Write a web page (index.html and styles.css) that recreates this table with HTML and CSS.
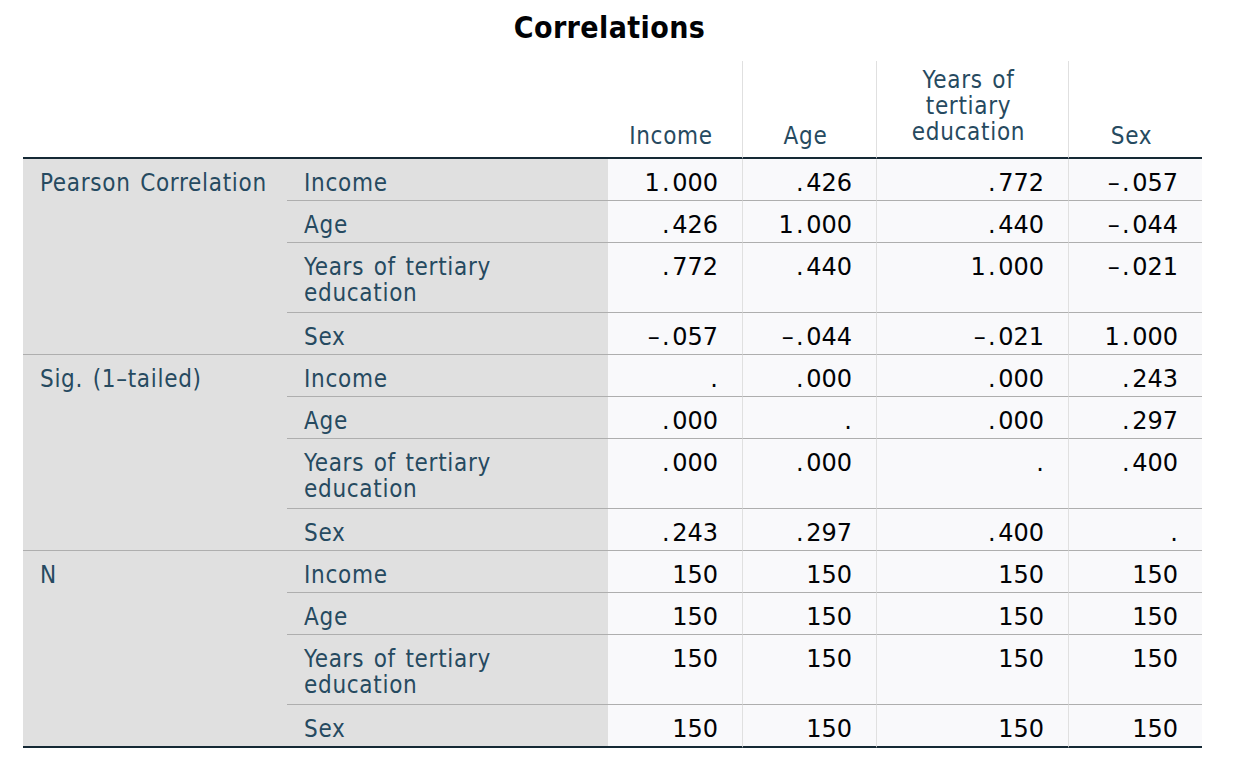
FILE: index.html
```html
<!DOCTYPE html>
<html>
<head>
<meta charset="utf-8">
<title>Correlations</title>
<link rel="stylesheet" href="styles.css">
</head>
<body>
<div class="wrap">
  <div class="title">Correlations</div>
  <table class="corr">
    <colgroup>
      <col class="c1"><col class="c2"><col class="c3"><col class="c4"><col class="c5"><col class="c6">
    </colgroup>
    <thead>
      <tr>
        <th class="blank" colspan="2"></th>
        <th class="ch nol">Income</th>
        <th class="ch">Age</th>
        <th class="ch multi">Years of<br>tertiary<br>education</th>
        <th class="ch">Sex</th>
      </tr>
    </thead>
    <tbody>
      <tr>
        <th class="grp" rowspan="4">Pearson Correlation</th>
        <th class="var">Income</th>
        <td class="nol">1<i>.</i>000</td><td><i>.</i>426</td><td><i>.</i>772</td><td>–<i>.</i>057</td>
      </tr>
      <tr>
        <th class="var">Age</th>
        <td class="nol"><i>.</i>426</td><td>1<i>.</i>000</td><td><i>.</i>440</td><td>–<i>.</i>044</td>
      </tr>
      <tr class="two">
        <th class="var">Years of tertiary<br>education</th>
        <td class="nol"><i>.</i>772</td><td><i>.</i>440</td><td>1<i>.</i>000</td><td>–<i>.</i>021</td>
      </tr>
      <tr>
        <th class="var">Sex</th>
        <td class="nol">–<i>.</i>057</td><td>–<i>.</i>044</td><td>–<i>.</i>021</td><td>1<i>.</i>000</td>
      </tr>

      <tr>
        <th class="grp" rowspan="4">Sig. (1–tailed)</th>
        <th class="var">Income</th>
        <td class="nol">.</td><td><i>.</i>000</td><td><i>.</i>000</td><td><i>.</i>243</td>
      </tr>
      <tr>
        <th class="var">Age</th>
        <td class="nol"><i>.</i>000</td><td>.</td><td><i>.</i>000</td><td><i>.</i>297</td>
      </tr>
      <tr class="two">
        <th class="var">Years of tertiary<br>education</th>
        <td class="nol"><i>.</i>000</td><td><i>.</i>000</td><td>.</td><td><i>.</i>400</td>
      </tr>
      <tr>
        <th class="var">Sex</th>
        <td class="nol"><i>.</i>243</td><td><i>.</i>297</td><td><i>.</i>400</td><td>.</td>
      </tr>

      <tr>
        <th class="grp last" rowspan="4">N</th>
        <th class="var">Income</th>
        <td class="nol">150</td><td>150</td><td>150</td><td>150</td>
      </tr>
      <tr>
        <th class="var">Age</th>
        <td class="nol">150</td><td>150</td><td>150</td><td>150</td>
      </tr>
      <tr class="two">
        <th class="var">Years of tertiary<br>education</th>
        <td class="nol">150</td><td>150</td><td>150</td><td>150</td>
      </tr>
      <tr class="end">
        <th class="var">Sex</th>
        <td class="nol">150</td><td>150</td><td>150</td><td>150</td>
      </tr>
    </tbody>
  </table>
</div>
</body>
</html>
```

FILE: styles.css
```css
html, body {
  margin: 0;
  padding: 0;
  background: #ffffff;
}

body {
  font-family: "DejaVu Sans Condensed", "DejaVu Sans", sans-serif;
  font-stretch: condensed;
}

.wrap {
  padding-left: 23px;
  width: 1179px;
}

.title {
  height: 61px;
  box-sizing: border-box;
  padding-top: 13px;
  text-align: center;
  font-weight: bold;
  font-size: 30px;
  line-height: 30px;
  letter-spacing: 0.4px;
  color: #010205;
  padding-right: 6px;
}

.corr {
  width: 1179px;
  table-layout: fixed;
  border-collapse: separate;
  border-spacing: 0;
  font-size: 24px;
  line-height: 26px;
}

.c1 { width: 264px; }
.c2 { width: 321px; }
.c3 { width: 134px; }
.c4 { width: 134px; }
.c5 { width: 192px; }
.c6 { width: 134px; }

.corr th,
.corr td {
  margin: 0;
  font-weight: normal;
  box-sizing: border-box;
}

.corr th {
  letter-spacing: 0.7px;
  word-spacing: 2px;
}

/* header */
.corr thead th {
  background: #ffffff;
  color: #264a60;
  border-bottom: 2px solid #152935;
  vertical-align: bottom;
  text-align: center;
  padding: 0 8px 8px 0;
}

.corr thead th.ch {
  border-left: 1px solid #e0e0e0;
}

.corr thead th.nol {
  border-left: 0;
}

.corr thead th.multi {
  padding-top: 6px;
  padding-bottom: 12px;
}

/* body */
.corr tbody th {
  background: #e0e0e0;
  color: #264a60;
  text-align: left;
  vertical-align: top;
  white-space: nowrap;
}

.grp {
  padding: 11px 8px 0 17px;
  border-bottom: 1px solid #aeaeae;
}

.var {
  padding: 11px 8px 4px 17px;
  border-bottom: 1px solid #aeaeae;
}

.corr tbody td {
  background: #f9f9fb;
  color: #010205;
  font-family: "DejaVu Sans", sans-serif;
  font-stretch: normal;
  text-align: right;
  vertical-align: top;
  padding: 11px 24px 4px 8px;
  border-bottom: 1px solid #aeaeae;
  border-left: 1px solid #e0e0e0;
  white-space: nowrap;
}

.corr tbody td.nol {
  border-left: 0;
}

.two .var {
  padding-bottom: 6px;
}

.corr i {
  font-style: normal;
  display: inline-block;
  width: 12.5px;
  text-align: center;
}

.corr tbody .grp.last,
.corr tbody .end .var,
.corr tbody .end td {
  border-bottom: 2px solid #152935;
}
```
